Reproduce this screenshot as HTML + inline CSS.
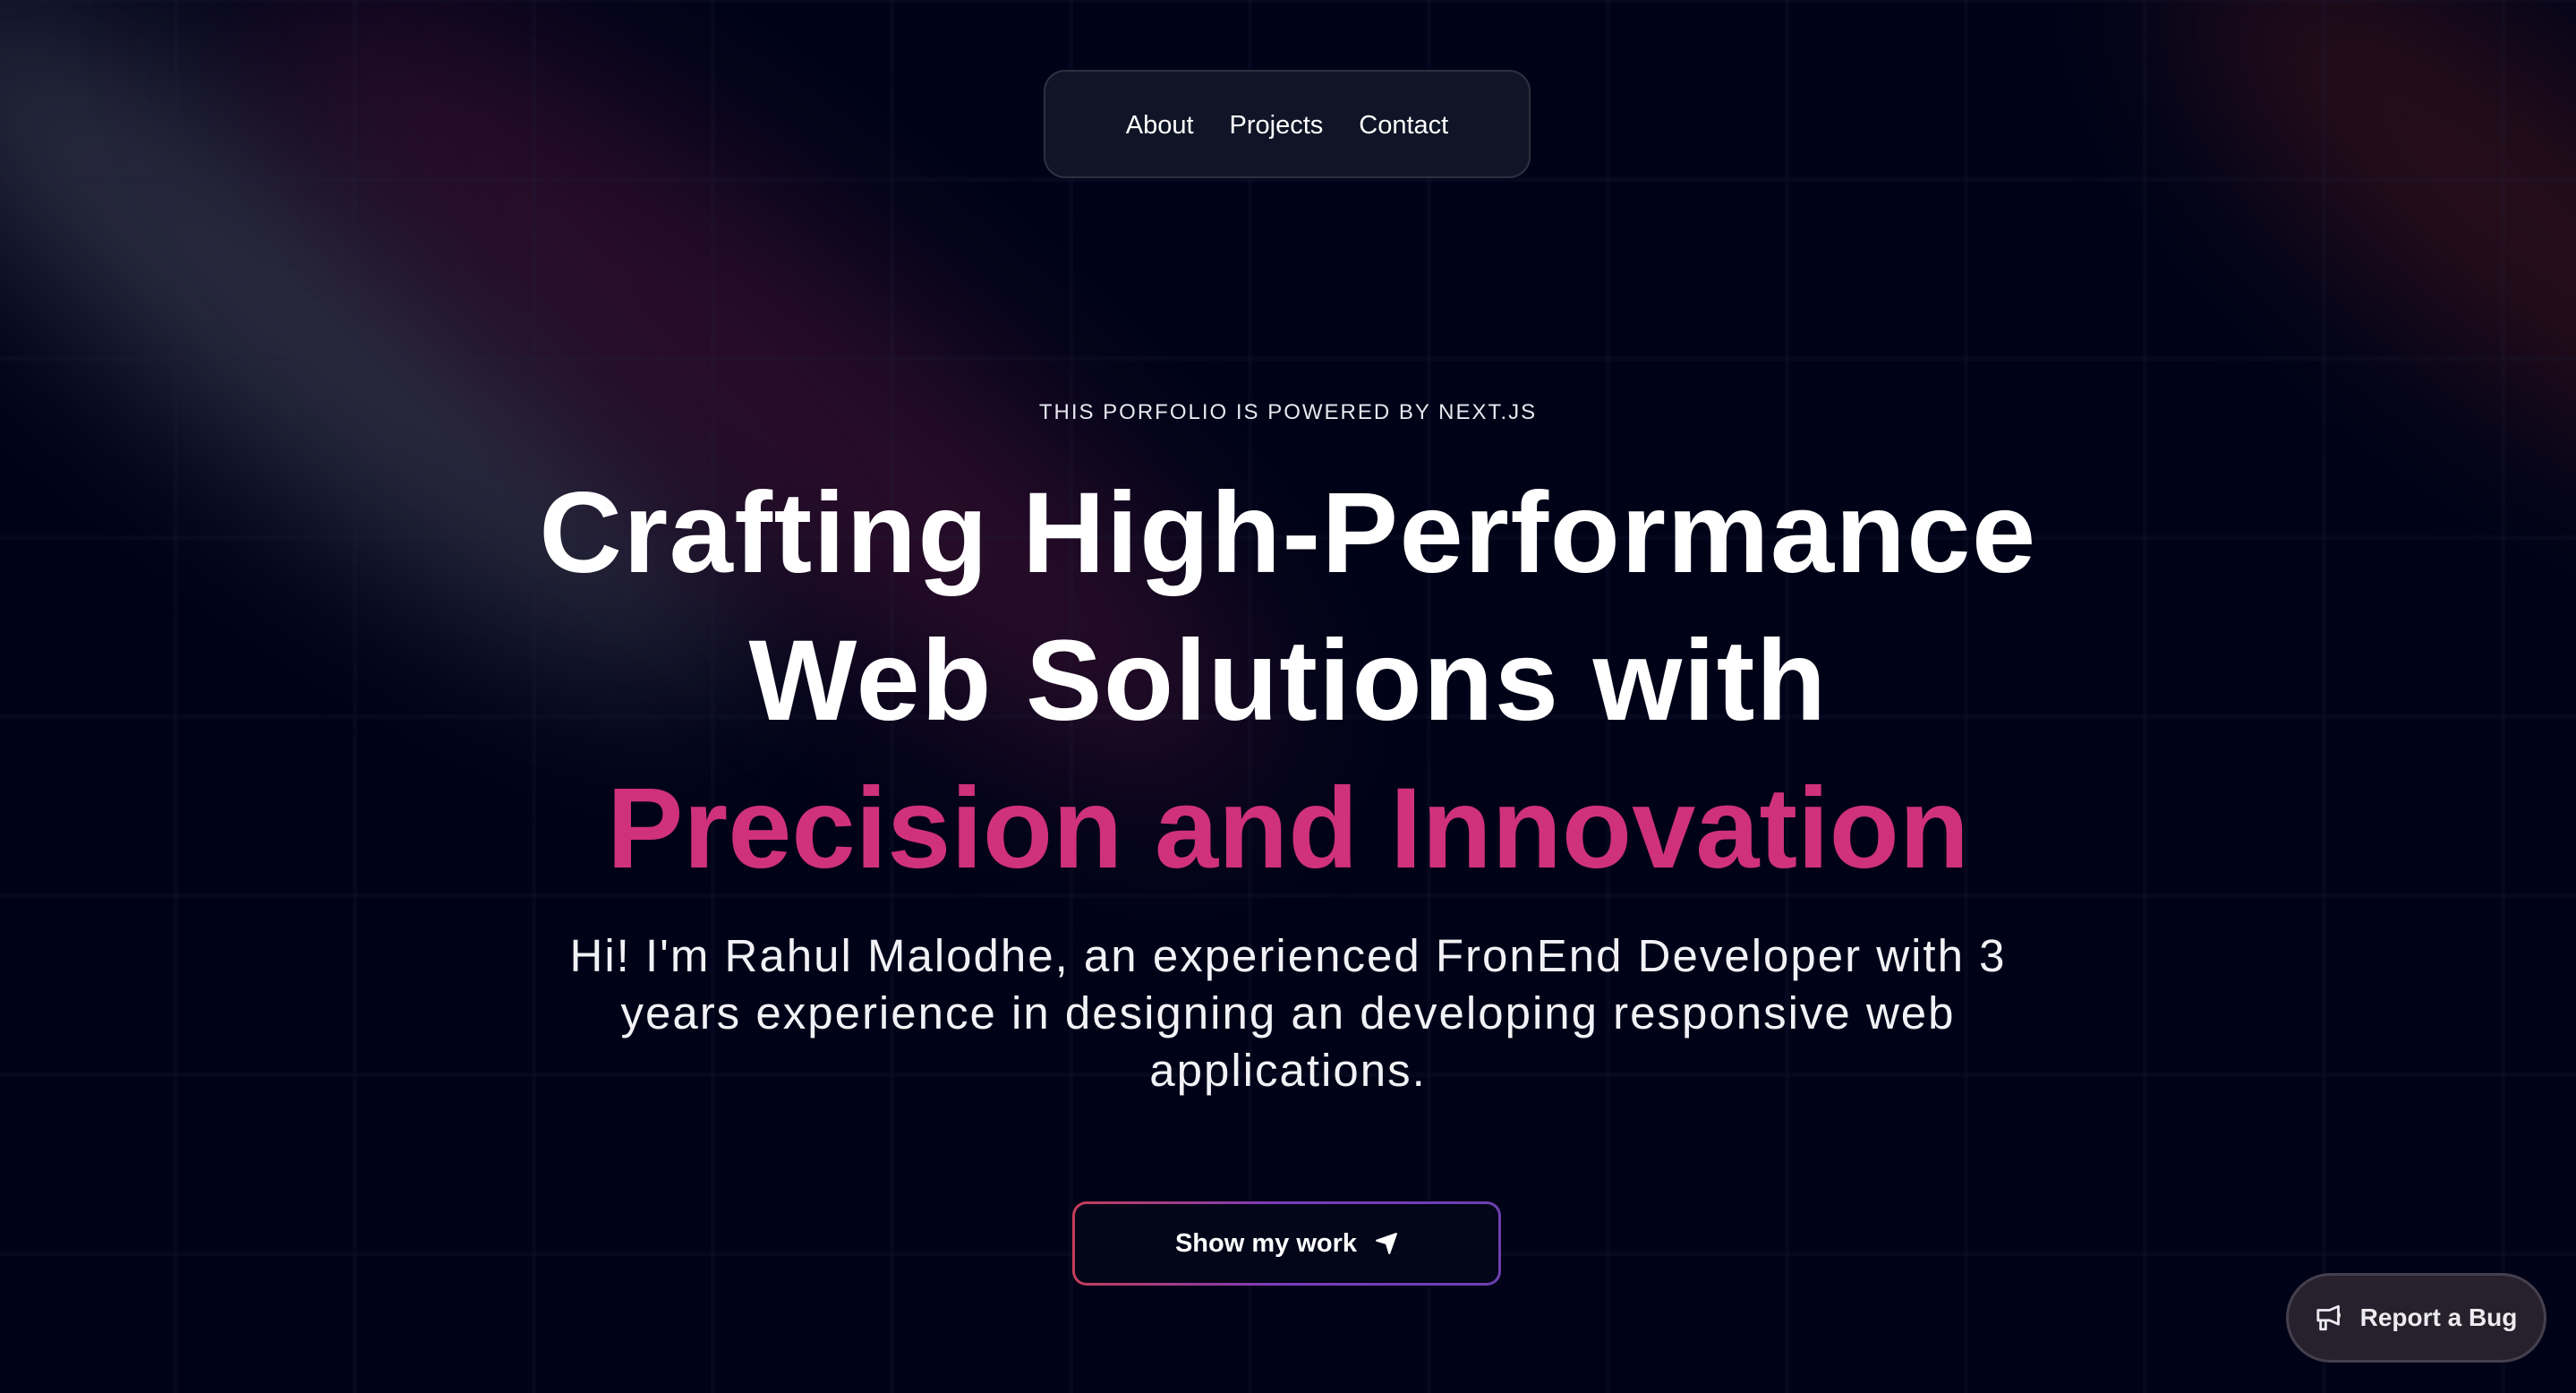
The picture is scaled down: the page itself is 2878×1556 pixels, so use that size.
<!DOCTYPE html>
<html><head><meta charset="utf-8"><style>
html,body{margin:0;padding:0;width:2878px;height:1556px;overflow:hidden;background:#000318;font-family:"Liberation Sans",sans-serif;color:#fff}
.bg{position:absolute;inset:0;overflow:hidden}
.grid{position:absolute;inset:0;background-image:linear-gradient(to right,rgba(30,34,60,.16) 0,rgba(30,34,60,.16) 5px,transparent 5px),linear-gradient(to bottom,rgba(30,34,60,.16) 0,rgba(30,34,60,.16) 5px,transparent 5px);background-size:200px 200px;background-position:-6px -2px}
.streak{position:absolute;filter:blur(90px);border-radius:50%}
.nav{position:absolute;left:1166px;top:78px;width:544px;height:121px;box-sizing:border-box;border:2px solid #2c3140;border-radius:24px;background:#0f1426;display:flex;justify-content:center;align-items:center;gap:40px;font-size:29px;padding-top:4px}
.center{position:absolute;left:0;width:2878px;text-align:center}
.btn{position:absolute;left:1198px;top:1342px;width:479px;height:94px;box-sizing:border-box;border-radius:16px;padding:3px;background:linear-gradient(90deg,#c53d5a,#7a3cc0 50%,#6d3fb0);}
.btn div{width:100%;height:100%;border-radius:13px;background:#030619;display:flex;align-items:center;justify-content:center;font-size:29px;font-weight:bold;gap:20px}
.bug{position:absolute;left:2554px;top:1422px;width:291px;height:100px;box-sizing:border-box;border:3px solid #46404e;border-radius:50px;background:#26212d;display:flex;align-items:center;justify-content:center;gap:16px;font-size:28px;font-weight:bold;color:#ecebf0}
</style></head><body>
<div class="bg">
<div class="streak" style="left:-250px;top:220px;width:1200px;height:300px;background:#35364a;opacity:.8;transform:rotate(38deg)"></div>
<div class="streak" style="left:150px;top:260px;width:1400px;height:340px;background:#36102f;opacity:.75;transform:rotate(38deg)"></div>
<div class="streak" style="left:2350px;top:80px;width:900px;height:300px;background:#32111c;opacity:.8;transform:rotate(40deg)"></div>
<div class="grid"></div>
</div>
<div class="nav"><span>About</span><span>Projects</span><span>Contact</span></div>
<div class="center" style="top:447px;font-size:24px;letter-spacing:2px;color:#e6e8ee">THIS PORFOLIO IS POWERED BY NEXT.JS</div>
<div class="center" style="top:513px;font-size:128px;font-weight:bold;line-height:165px;letter-spacing:1.5px">Crafting High-Performance<br>Web Solutions with<br><span style="color:#d0317b;letter-spacing:0">Precision and Innovation</span></div>
<div class="center" style="top:1036px;font-size:51px;line-height:64px;letter-spacing:2px;color:#f2f2f6"><div style="width:1680px;margin:0 auto">Hi! I'm Rahul Malodhe, an experienced FronEnd Developer with 3 years experience in designing an developing responsive web applications.</div></div>
<div class="btn"><div>Show my work <svg width="26" height="26" viewBox="0 0 24 24"><path d="M2 9 L22 2 L15 22 L12 12 Z" fill="#fff" stroke="#fff" stroke-width="2" stroke-linejoin="round"/></svg></div></div>
<div class="bug"><svg width="34" height="34" viewBox="0 0 24 24" fill="none" stroke="#ecebf0" stroke-width="2" stroke-linejoin="round"><path d="M2 6h9l7-3v14l-7-3H2z"/><path d="M4 14v7h4v-7"/><path d="M18 8a3 3 0 0 1 0 4"/></svg><span>Report a Bug</span></div>
</body></html>
